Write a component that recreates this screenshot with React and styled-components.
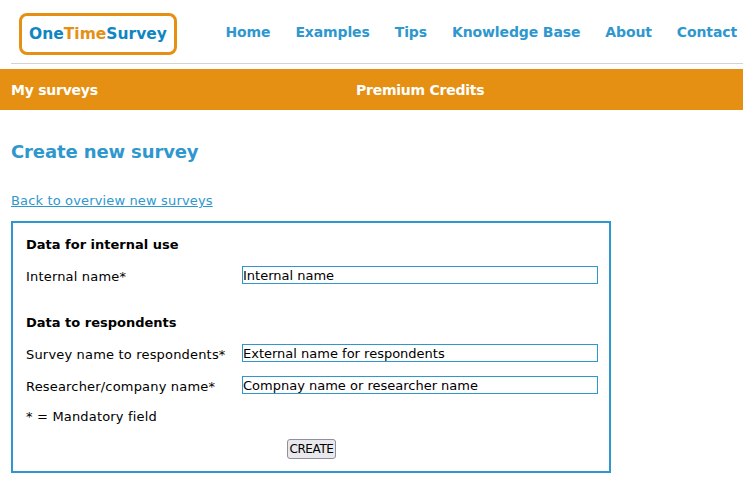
import React from 'react';
import styled, { createGlobalStyle } from 'styled-components';

const blue = '#2e97ce';
const orange = '#e59013';

const GlobalStyle = createGlobalStyle`
  html, body {
    margin: 0;
    padding: 0;
    background: #fff;
    font-family: "DejaVu Sans", Verdana, sans-serif;
    font-size: 13px;
    color: #000;
  }
`;

const Page = styled.div`
  width: 743px;
  height: 497px;
  overflow: hidden;
`;

const Header = styled.header`
  display: flex;
  align-items: flex-start;
  justify-content: space-between;
  height: 63px;
  margin-left: 11px;
  border-bottom: 1px solid #d3d3d3;
`;

const Logo = styled.div`
  box-sizing: border-box;
  width: 158px;
  height: 42px;
  margin: 13px 0 0 8px;
  padding-bottom: 1px;
  border: 3px solid ${orange};
  border-radius: 8px;
  display: flex;
  align-items: center;
  justify-content: center;
  font-size: 15.5px;
  font-weight: bold;
  color: #0f86c3;
  white-space: nowrap;
`;

const LogoAccent = styled.span`
  color: ${orange};
`;

const Nav = styled.nav`
  display: flex;
  gap: 25px;
  margin: 24px 6px 0 0;
`;

const NavLink = styled.a`
  font-size: 14px;
  line-height: 17px;
  font-weight: bold;
  letter-spacing: -0.12px;
  color: ${blue};
  white-space: nowrap;
`;

const MenuBar = styled.div`
  display: flex;
  height: 41px;
  margin-top: 5px;
  align-items: center;
  padding-left: 11px;
  background: ${orange};
`;

const MenuItem = styled.a`
  width: ${(p) => p.$width}px;
  font-size: 14px;
  font-weight: bold;
  letter-spacing: -0.25px;
  color: #fff;
`;

const Main = styled.main`
  padding: 0 11px;
`;

const Title = styled.h1`
  margin: 30px 0 0;
  font-size: 18px;
  line-height: 23px;
  font-weight: bold;
  letter-spacing: -0.12px;
  color: ${blue};
`;

const BackLink = styled.a`
  display: block;
  margin-top: 30px;
  font-size: 13px;
  line-height: 16px;
  letter-spacing: 0.15px;
  color: ${blue};
  text-decoration: underline;
`;

const FormBox = styled.form`
  box-sizing: border-box;
  width: 600px;
  height: 252px;
  margin-top: 12px;
  padding: 14px 11px 0 13px;
  border: 2px solid ${blue};
`;

const SectionTitle = styled.h2`
  margin: ${(p) => p.$top || 0}px 0 0;
  font-size: 13px;
  line-height: 16px;
  font-weight: bold;
`;

const Row = styled.div`
  display: flex;
  align-items: center;
  height: 18px;
  margin-top: ${(p) => p.$top}px;
`;

const Label = styled.label`
  width: 216px;
  flex: none;
  font-size: 13px;
  line-height: 16px;
  letter-spacing: 0.18px;
  padding-top: 4px;
`;

const Field = styled.input`
  box-sizing: border-box;
  flex: none;
  width: 356px;
  height: 18px;
  padding: 0;
  border: 1px solid ${blue};
  border-radius: 0;
  background: #fff;
  color: #000;
  font-family: inherit;
  font-size: 13px;
  line-height: 16px;
  outline: none;
`;

const Note = styled.p`
  margin: 15px 0 0;
  font-size: 13px;
  line-height: 16px;
  letter-spacing: 0.18px;
`;

const Actions = styled.div`
  display: flex;
  margin: 14px 0 0 261px;
`;

const CreateButton = styled.button`
  box-sizing: border-box;
  width: 49px;
  height: 20px;
  padding: 0;
  border: 1px solid #8f8f9d;
  border-radius: 3px;
  background: #e9e9ed;
  color: #000;
  font-family: "DejaVu Sans", Verdana, sans-serif;
  font-size: 12px;
  letter-spacing: -0.4px;
`;

export default function App() {
  return (
    <Page>
      <GlobalStyle />
      <Header>
        <Logo>
          One<LogoAccent>Time</LogoAccent>Survey
        </Logo>
        <Nav>
          <NavLink>Home</NavLink>
          <NavLink>Examples</NavLink>
          <NavLink>Tips</NavLink>
          <NavLink>Knowledge Base</NavLink>
          <NavLink>About</NavLink>
          <NavLink>Contact</NavLink>
        </Nav>
      </Header>
      <MenuBar>
        <MenuItem $width={345}>My surveys</MenuItem>
        <MenuItem $width={200}>Premium Credits</MenuItem>
      </MenuBar>
      <Main>
        <Title>Create new survey</Title>
        <BackLink>Back to overview new surveys</BackLink>
        <FormBox>
          <SectionTitle>Data for internal use</SectionTitle>
          <Row $top={13}>
            <Label>Internal name*</Label>
            <Field defaultValue="Internal name" />
          </Row>
          <SectionTitle $top={31}>Data to respondents</SectionTitle>
          <Row $top={13}>
            <Label>Survey name to respondents*</Label>
            <Field defaultValue="External name for respondents" />
          </Row>
          <Row $top={14}>
            <Label>Researcher/company name*</Label>
            <Field defaultValue="Compnay name or researcher name" />
          </Row>
          <Note>* = Mandatory field</Note>
          <Actions>
            <CreateButton type="button">CREATE</CreateButton>
          </Actions>
        </FormBox>
      </Main>
    </Page>
  );
}
